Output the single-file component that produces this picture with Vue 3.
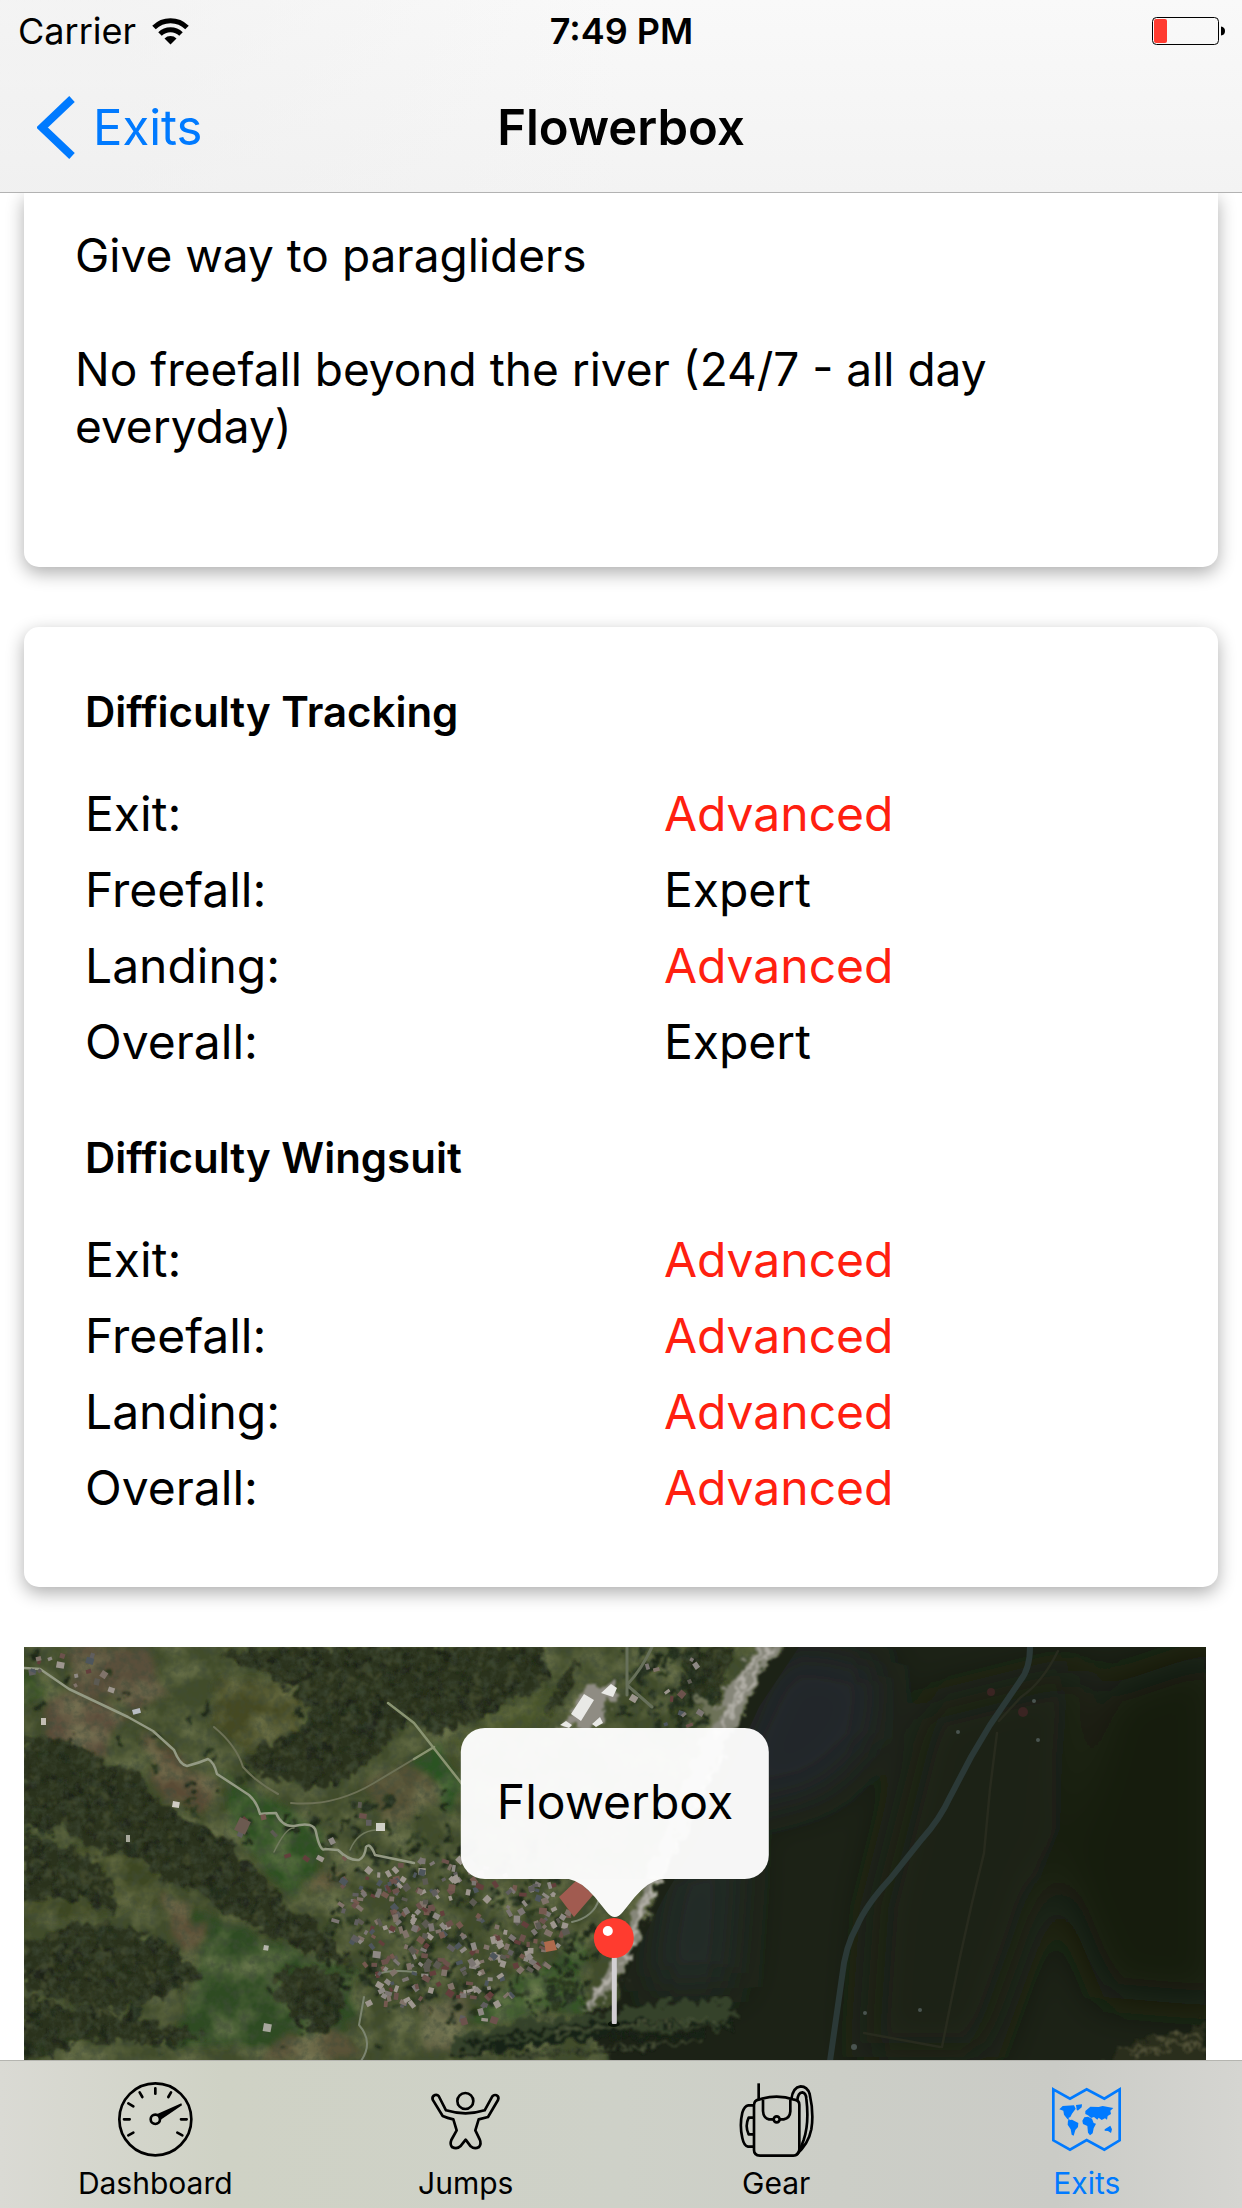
<template>
  <div class="screen">
    <header class="nav-header">
      <div class="status-bar">
        <div class="status-left">
          <span>Carrier</span>
          <svg class="wifi" viewBox="0 0 37 28" aria-hidden="true">
            <g fill="none" stroke="#000" stroke-width="5">
              <path d="M2 10.500A23.500 23.500 0 0 1 35 10.500" />
              <path d="M8 17A15 15 0 0 1 29 17" />
            </g>
            <path d="M12.500 21.500A8.500 8.500 0 0 1 24.500 21.500L18.500 27.500Z" />
          </svg>
        </div>
        <span class="status-time">7:49 PM</span>
        <svg class="battery" viewBox="0 0 73 28" aria-hidden="true">
          <rect x="0.500" y="0.500" width="66" height="27" rx="4" fill="none" stroke="#000" />
          <rect x="2" y="2" width="13" height="24" rx="2" fill="#ff3b30" />
          <path d="M69 9.500q4 0.500 4 4.500t-4 4.500z" />
        </svg>
      </div>
      <nav class="nav-bar">
        <a href="#exits" class="back-link">
          <svg class="chevron" viewBox="0 0 38 63" aria-hidden="true">
            <path d="M35 3L5 31.500L35 60" fill="none" stroke="currentColor" stroke-width="8" />
          </svg>
          <span>Exits</span>
        </a>
        <h1 class="nav-title">Flowerbox</h1>
      </nav>
    </header>

    <main class="content">
      <section class="card card-rules">
        <p v-for="rule in rules" :key="rule">{{ rule }}</p>
      </section>

      <section class="card card-difficulty">
        <div v-for="group in difficulties" :key="group.id">
          <h2 :id="group.id">{{ group.title }}</h2>
          <table :aria-labelledby="group.id">
            <tbody>
              <tr v-for="row in group.rows" :key="row.label">
                <th scope="row">{{ row.label }}:</th>
                <td :class="{ advanced: row.level === 'Advanced' }">{{ row.level }}</td>
              </tr>
            </tbody>
          </table>
        </div>
      </section>

      <section class="map">
        <svg class="map-picture" viewBox="0 0 1182 414" preserveAspectRatio="xMidYMin slice" aria-hidden="true">
          <defs>
            <filter id="rough" x="-5%" y="-5%" width="110%" height="110%">
              <feTurbulence type="fractalNoise" baseFrequency="0.09" numOctaves="3" seed="4" result="n" />
              <feDisplacementMap in="SourceGraphic" in2="n" scale="22" xChannelSelector="R" yChannelSelector="G" />
              <feGaussianBlur stdDeviation="0.800" />
            </filter>
            <filter id="soft" x="-20%" y="-20%" width="140%" height="140%">
              <feTurbulence type="fractalNoise" baseFrequency="0.04" numOctaves="3" seed="9" result="n" />
              <feDisplacementMap in="SourceGraphic" in2="n" scale="26" xChannelSelector="R" yChannelSelector="G" />
              <feGaussianBlur stdDeviation="3" />
            </filter>
            <filter id="haze" x="-20%" y="-20%" width="140%" height="140%">
              <feGaussianBlur stdDeviation="22" />
            </filter>
            <filter id="grain" x="0" y="0" width="100%" height="100%">
              <feTurbulence type="fractalNoise" baseFrequency="0.120" numOctaves="4" seed="12" />
              <feColorMatrix values="0 0 0 0 0.050  0 0 0 0 0.070  0 0 0 0 0.040  1.400 0 0 0 -0.580" />
            </filter>
            <filter id="light" x="0" y="0" width="100%" height="100%">
              <feTurbulence type="fractalNoise" baseFrequency="0.030" numOctaves="4" seed="31" />
              <feColorMatrix values="0 0 0 0 0.260  0 0 0 0 0.280  0 0 0 0 0.130  0 1.200 0 0 -0.450" />
            </filter>
            <clipPath id="shade-area">
              <path d="M775 0H1182V414H590L592 358L615 300L640 250L670 200L712 110L735 60Z" />
            </clipPath>
          </defs>

          <rect width="1182" height="414" fill="#414c2a" />

          <!-- campos -->
          <g filter="url(#soft)">
            <polygon v-for="(field, i) in fields" :key="i" :points="field.points" :fill="field.color" />
          </g>
          <rect width="760" height="414" filter="url(#light)" />

          <!-- bosques -->
          <g filter="url(#rough)">
            <polygon v-for="(points, i) in forests" :key="i" :points="points" fill="#29301e" />
          </g>
          <g filter="url(#rough)">
            <circle v-for="(tree, i) in trees" :key="i" :cx="tree.x" :cy="tree.y" :r="tree.r" :fill="tree.color" />
          </g>
          <rect width="760" height="414" filter="url(#grain)" />

          <!-- caminos -->
          <g fill="none" stroke-linecap="round" stroke-linejoin="round">
            <path d="M0 21L16 22L45 42L104 70L129 84L150 103Q156 118 163 119Q175 116 184 112Q190 115 193 127L225 148Q233 155 236 167Q246 166 252 166Q258 180 270 179Q290 174 292 185Q296 205 301 202L314 203Q325 214 335 213Q341 210 342 200Q346 195 351 208L390 216" stroke="#949a84" stroke-width="2.500" />
            <path d="M190 80Q212 98 219 120Q232 135 254 147M267 156Q310 160 350 136L390 112" stroke="#6d7156" stroke-width="2" />
            <path d="M326 203Q334 184 352 183M250 205Q262 180 270 181" stroke="#717a5e" stroke-width="1.500" />
            <path d="M364 56L390 76L438 137M390 112L410 100" stroke="#8a9472" stroke-width="2.500" />
            <path d="M352 328Q362 322 392 325M340 350L335 378Q350 395 337 414M548 275Q570 270 575 252" stroke="#7c8570" stroke-width="2" />
            <path d="M603 0V48M603 38Q618 22 628 0M603 38L628 60" stroke="#67705a" stroke-width="3" />
          </g>

          <!-- pueblo -->
          <g>
            <rect
              v-for="(house, i) in houses"
              :key="i"
              :x="house.x"
              :y="house.y"
              :width="house.w"
              :height="house.h"
              :fill="house.color"
              :transform="`rotate(${house.angle} ${house.x} ${house.y})`"
            />
          </g>
          <g filter="url(#rough)">
            <path d="M532 80L548 68L548 58L566 38L592 33L595 48L580 62L575 80Z" fill="#8f8c83" />
          </g>
          <path d="M547 67L560 47L570 53L557 74ZM577 46L587 37L593 41L589 50ZM568 77L576 70L579 76L572 80ZM536 78L542 74L548 78L545 81Z" fill="#e9e9e6" />
          <path d="M535 250L553 233L569 248L550 270Z" fill="#a15b50" />
          <path d="M520 295L530 293L533 303L522 305Z" fill="#b06a4c" />

          <!-- ladera en sombra -->
          <g filter="url(#rough)">
            <polygon points="765,0 742,18 730,45 715,78 692,110 650,200 625,265 605,310 592,358 560,365 590,420 1190,420 1190,-10 770,-10" fill="#1c2017" />
          </g>
          <g clip-path="url(#shade-area)">
            <g filter="url(#haze)">
              <polygon points="755,0 810,5 860,20 850,95 800,145 700,170 715,85" fill="#20282a" />
              <polygon points="640,220 720,190 710,340 620,345" fill="#202c27" />
              <polygon points="900,60 1060,20 1040,180 1000,300 960,410 840,410 850,260" fill="#1b2112" />
              <polygon points="1080,40 1200,0 1200,360 1080,350 1030,230" fill="#181a11" />
            </g>
          </g>
          <g filter="url(#rough)">
            <path d="M733 -5L765 -5L740 20L714 76L696 108L650 196L628 250L603 318L592 340L578 352L560 362L570 345L590 310L607 268L640 190L682 84L700 44L716 26Z" fill="#868679" />
            <path d="M746 0L706 70M735 0L692 92M700 105L612 278M622 246L600 316M594 320L566 358" fill="none" stroke="#b3b0a8" stroke-width="3" />
            <path d="M675 48L692 72L683 84L700 60" fill="none" stroke="#6d7258" stroke-width="7" />
          </g>
          <g filter="url(#rough)">
            <polygon points="425,390 500,375 580,366 640,355 705,353 715,372 690,383 600,385 500,400 430,405" fill="#36422b" />
            <path d="M440 395L590 375L710 380M430 408L560 390L680 389M490 410L640 398M460 400L600 384" fill="none" stroke="#192015" stroke-width="4" />
            <path d="M480 412L600 400L680 394M530 386L690 372" fill="none" stroke="#4c543a" stroke-width="1.500" />
            <path d="M1085 414L1110 395L1140 388L1182 376V420H1085Z" fill="#2b2f1e" />
            <path d="M1094 402L1135 404M1105 410L1160 394M1130 390L1180 402M1150 384L1182 392" fill="none" stroke="#55553a" stroke-width="2" />
          </g>
          <g fill="none" stroke-linecap="round">
            <path d="M1006 0Q1006 22 996 34L966 78L947 110L926 150Q916 172 898 192L866 232Q842 258 833 279Q821 300 818 330L806 414" stroke="#2b3937" stroke-width="6" />
            <path d="M1034 4Q1018 36 997 50L975 74M973 86L966 142L960 206L948 256L936 310L918 400M840 386L916 400" stroke="#282b1e" stroke-width="2.500" />
          </g>
          <g fill="#3a2422">
            <circle cx="967" cy="45" r="4" />
            <circle cx="999" cy="65" r="5" />
          </g>
          <g fill="#4a5450">
            <circle cx="934" cy="85" r="2" />
            <circle cx="1010" cy="54" r="2" />
            <circle cx="1014" cy="93" r="2" />
            <circle cx="896" cy="363" r="2" />
            <circle cx="841" cy="366" r="2" />
            <circle cx="830" cy="400" r="3" />
          </g>
        </svg>

        <div class="marker">
          <button type="button" class="callout">Flowerbox</button>
          <svg class="pin" viewBox="0 0 92 148" aria-hidden="true">
            <path d="M0 0Q12 2 26 18L38 33Q46 43 54 33L66 18Q80 2 92 0Z" fill="#f9f9f8" />
            <ellipse cx="45" cy="145" rx="6" ry="3" fill="#0a1408" />
            <rect x="43" y="78" width="5" height="67" rx="1" fill="#d3d0d4" />
            <circle cx="45" cy="59" r="20" fill="#ff3b2f" />
            <circle cx="39" cy="52" r="5" fill="#fff" />
          </svg>
        </div>
      </section>
    </main>

    <nav class="tab-bar">
      <a href="#dashboard" class="tab">
        <svg viewBox="174 96 225 225" aria-hidden="true">
          <g fill="none" stroke="currentColor" stroke-width="8">
            <circle cx="286" cy="208" r="108" />
            <circle cx="286" cy="208" r="14" />
            <path
              d="M286 115V131M239 127L247 141M333 127L325 141M205 160L220 169M192 208H209M363 208H380M205 256L220 248M367 256L352 248"
              stroke-linecap="round"
            />
          </g>
          <path d="M290 193L364 160L366 166L300 211Z" fill="currentColor" />
        </svg>
        <span>Dashboard</span>
      </a>
      <a href="#jumps" class="tab">
        <svg viewBox="174 96 225 225" aria-hidden="true">
          <g fill="none" stroke="currentColor" stroke-width="8" stroke-linejoin="round">
            <circle cx="286" cy="153" r="24" />
            <path d="M206 138Q202 133 195 135Q185 139 188 149L218 198Q232 204 250 208L260 241L244 270Q239 283 246 291Q260 299 271 289L287 269L302 289Q314 299 327 291Q335 282 329 268L316 241L326 208L354 201L384 150Q388 140 380 136Q372 133 367 139L344 181Q287 199 228 181Z" />
          </g>
        </svg>
        <span>Jumps</span>
      </a>
      <a href="#gear" class="tab">
        <svg viewBox="177 96 225 225" aria-hidden="true">
          <g fill="none" stroke="currentColor" stroke-width="8" stroke-linejoin="round">
            <path d="M236 100V150" />
            <path d="M222 166Q222 151 236 149Q290 131 343 149Q358 151 358 164V298Q356 317 340 317H240Q222 316 222 300Z" />
            <path d="M249 149V183Q250 204 267 208H280M300 208H311Q330 204 331 184V149" />
            <circle cx="290" cy="208" r="9" />
            <path d="M221 166H205Q193 168 187 188Q178 226 187 264Q192 288 204 290H222M221 203H206Q194 228 206 253H221" />
            <path d="M334 148Q338 112 362 109Q382 109 389 132Q402 190 394 238Q385 283 349 314M352 153Q353 128 367 127Q378 129 379 146Q388 220 371 270L360 299" />
          </g>
        </svg>
        <span>Gear</span>
      </a>
      <a href="#exits" class="tab active" aria-current="page">
        <svg viewBox="177 96 225 225" aria-hidden="true">
          <path
            d="M190 118L240 146L290 118L343 146L389 118V271L343 299L290 270L240 299L190 271Z"
            fill="none"
            stroke="currentColor"
            stroke-width="8"
          />
          <g fill="currentColor">
            <path d="M208 178L218 168L252 166L257 176L246 191L241 201L235 204L241 212L232 207L222 194L220 182Z" />
            <path d="M258 165L276 163L275 172L263 182L260 178Z" />
            <path d="M234 211L246 209L265 219L264 231L256 240L251 257L245 254L242 238L233 224Z" />
            <path d="M286 192L286 183L301 170L326 171L338 168L370 174L361 182L363 192L353 198L351 209L345 205L335 210L326 203L322 209L312 201L303 204L294 196Z" />
            <path d="M283 202L294 200L306 206L311 219L318 221L311 235L308 250L300 256L294 248L292 228L279 222L277 212Z" />
            <path d="M344 238L361 227L366 238L363 249L354 243L344 242Z" />
          </g>
        </svg>
        <span>Exits</span>
      </a>
    </nav>
  </div>
</template>

<script setup>
const rules = [
  'Give way to paragliders',
  'No freefall beyond the river (24/7 - all day everyday)'
]

const difficulties = [
  {
    id: 'tracking',
    title: 'Difficulty Tracking',
    rows: [
      { label: 'Exit', level: 'Advanced' },
      { label: 'Freefall', level: 'Expert' },
      { label: 'Landing', level: 'Advanced' },
      { label: 'Overall', level: 'Expert' }
    ]
  },
  {
    id: 'wingsuit',
    title: 'Difficulty Wingsuit',
    rows: [
      { label: 'Exit', level: 'Advanced' },
      { label: 'Freefall', level: 'Advanced' },
      { label: 'Landing', level: 'Advanced' },
      { label: 'Overall', level: 'Advanced' }
    ]
  }
]

// Campos abiertos del valle
const fields = [
  { points: '45,0 125,0 140,50 110,65 50,40', color: '#5a503b' },
  { points: '25,50 60,45 100,72 80,110 20,95', color: '#5b4d3b' },
  { points: '115,88 145,100 165,125 195,130 180,165 140,155', color: '#5a4c35' },
  { points: '0,22 25,30 20,55 0,62', color: '#2f4a1e' },
  { points: '195,125 290,180 300,205 270,250 220,200', color: '#2f5120' },
  { points: '160,260 330,325 320,400 150,400 180,300', color: '#2e4c20' },
  { points: '130,250 165,255 180,290 165,305', color: '#5d5138' },
  { points: '200,30 280,50 270,90 220,105 185,70', color: '#454823' },
  { points: '60,195 110,205 150,240 120,260 0,275 0,240', color: '#3e4724' },
  { points: '255,385 330,390 340,414 240,414', color: '#5a5238' },
  { points: '285,225 330,230 320,245 290,240', color: '#5b5136' },
  { points: '340,140 390,110 410,145 370,180', color: '#555136' },
  { points: '430,90 500,50 545,45 520,75 440,115', color: '#4a552b' },
  { points: '390,110 415,100 440,140 425,170', color: '#2c5322' },
  { points: '480,340 530,310 560,290 560,360 460,378 430,370', color: '#345527' },
  { points: '400,355 440,350 430,405 400,405', color: '#5d5b40' }
]

const forests = [
  '0,92 43,93 76,113 116,126 133,156 163,173 209,193 216,213 243,233 263,260 296,280 329,320 303,313 253,293 209,270 176,246 136,233 103,203 73,203 39,180 0,180',
  '193,3 370,0 520,0 523,36 457,70 410,88 365,55 385,75 343,116 309,140 276,140 236,126 219,110 266,86 286,73 276,50 243,26 203,13',
  '256,325 290,318 320,335 320,365 305,386 270,372 252,350',
  '0,300 50,275 100,280 150,300 180,330 150,345 95,365 60,360 0,340',
  '0,350 50,360 110,370 180,388 150,395 60,395 0,414',
  '0,190 60,205 90,235 92,268 60,250 0,255',
  '540,30 555,12 552,35 535,60 520,70',
  '660,0 712,0 690,60 660,50'
]

// Generador con semilla fija: el paisaje no cambia entre renders
let seed = 20170
function random() {
  seed = (seed * 16807) % 2147483647
  return seed / 2147483647
}

function pick(list) {
  return list[Math.floor(random() * list.length)]
}

function scatter(count, x, y, width, height, make) {
  return Array.from({ length: count }, () => make(x + random() * width, y + random() * height))
}

function isInside(points, x, y) {
  const corners = points.split(' ').map(p => p.split(',').map(Number))
  let inside = false
  for (let i = 0, j = corners.length - 1; i < corners.length; j = i++) {
    const [xi, yi] = corners[i]
    const [xj, yj] = corners[j]
    if (yi > y !== yj > y && x < ((xj - xi) * (y - yi)) / (yj - yi) + xi) inside = !inside
  }
  return inside
}

const forestTree = (x, y) => ({ x, y, r: 1 + random() * 2.5, color: pick(['#39422a', '#40472c', '#1b2216', '#20281a']) })
const looseTree = (x, y) => ({ x, y, r: 2 + random() * 3, color: pick(['#222d1b', '#1c2717', '#29371f']) })

const trees = [
  ...scatter(5200, 0, 0, 720, 414, forestTree).filter(t => forests.some(f => isInside(f, t.x, t.y))),
  ...scatter(190, 300, 195, 240, 175, looseTree),
  ...scatter(70, 590, 0, 110, 80, looseTree),
  ...scatter(30, 300, 150, 130, 60, looseTree),
  ...scatter(40, 510, 280, 65, 80, looseTree),
  ...scatter(90, 0, 0, 430, 414, looseTree)
]

const roofs = ['#7c7673', '#8e8984', '#605e5e', '#6c524c', '#75594f', '#9d968e', '#4e565c', '#80736a', '#5c5a52', '#633f3c']
const house = (x, y) => ({
  x,
  y,
  w: 3 + random() * 5,
  h: 3 + random() * 4,
  angle: Math.round(random() * 80),
  color: pick(roofs)
})

const village = '345,215 438,205 500,232 532,235 548,275 528,310 505,330 475,370 435,375 405,350 370,360 335,370 345,320 300,270 320,225'

const houses = [
  ...scatter(520, 300, 200, 250, 175, house).filter(h => isInside(village, h.x, h.y)),
  ...scatter(16, 5, 0, 90, 40, house),
  ...scatter(12, 205, 150, 140, 60, house),
  ...scatter(14, 600, 10, 80, 70, house),
  { x: 240, y: 376, w: 8, h: 8, angle: 10, color: '#a6a69c' },
  { x: 240, y: 298, w: 5, h: 5, angle: 10, color: '#b5b5ab' },
  { x: 216, y: 170, w: 12, h: 14, angle: 25, color: '#6b5a50' },
  { x: 352, y: 176, w: 9, h: 8, angle: 0, color: '#d0d0c8' },
  { x: 149, y: 154, w: 7, h: 6, angle: 10, color: '#d0ccc4' },
  { x: 108, y: 63, w: 8, h: 5, angle: -15, color: '#b9bdc4' },
  { x: 17, y: 71, w: 5, h: 7, angle: 0, color: '#c2bdb4' },
  { x: 102, y: 188, w: 4, h: 7, angle: 0, color: '#a9a99c' }
]
</script>

<style>
html,
body {
  background: #fff;
}

body {
  margin: 0;
}
</style>

<style scoped>
.screen {
  display: flex;
  flex-direction: column;
  height: 100vh;
  overflow: hidden;
  background: #fff;
  color: #000;
  font-family: Inter, "Liberation Sans", sans-serif;
}

.nav-header {
  background: linear-gradient(90deg, rgba(238, 238, 238, 0.5) 10%, transparent 50%), linear-gradient(#f9f9f9, #f3f3f3);
  border-bottom: 1px solid #b2b2b2;
}

.status-bar {
  display: grid;
  grid-template-columns: 1fr auto 1fr;
  align-items: center;
  height: 62px;
  padding: 0 17px 0 18px;
  font-size: 36px;
}

.status-left {
  display: flex;
  align-items: center;
  gap: 16px;
}

.wifi {
  width: 37px;
  height: 28px;
}

.status-time {
  font-weight: 600;
}

.battery {
  width: 73px;
  height: 28px;
  justify-self: end;
}

.nav-bar {
  display: grid;
  grid-template-columns: 1fr auto 1fr;
  align-items: center;
  height: 130px;
  padding: 0 37px;
  font-size: 49px;
}

.back-link {
  display: flex;
  align-items: center;
  gap: 18px;
  color: #007aff;
  text-decoration: none;
}

.chevron {
  width: 38px;
  height: 63px;
}

.nav-title {
  margin: 0;
  font-size: 49px;
  font-weight: 600;
}

.content {
  flex: 1;
  min-height: 0;
  display: flex;
  flex-direction: column;
  gap: 60px;
  padding: 0 24px;
  overflow: hidden;
}

.card {
  border-radius: 15px;
  background: #fff;
  box-shadow: 0 6px 18px rgba(0, 0, 0, 0.32);
}

.card-rules {
  display: flex;
  flex-direction: column;
  gap: 57px;
  padding: 34px 51px 112px;
  border-radius: 0 0 15px 15px;
  font-size: 46px;
  line-height: 57px;
}

.card-rules p {
  margin: 0;
}

.card-difficulty {
  display: flex;
  flex-direction: column;
  gap: 53px;
  padding: 60px 61px 61px;
}

.card-difficulty h2 {
  margin: 0 0 39px;
  font-size: 42px;
  font-weight: 600;
  line-height: 50px;
}

table {
  width: 100%;
  table-layout: fixed;
  border-collapse: collapse;
  font-size: 48px;
  line-height: 76px;
}

th,
td {
  padding: 0;
  font-weight: 400;
  text-align: left;
}

th {
  width: 54%;
}

.advanced {
  color: #ff2010;
}

.map {
  position: relative;
  flex: 1;
  min-height: 0;
  margin-right: 12px;
  overflow: hidden;
}

.map-picture {
  display: block;
  width: 100%;
  height: 100%;
}

.marker {
  position: absolute;
  top: 81px;
  left: 50%;
  display: flex;
  flex-direction: column;
  align-items: center;
  transform: translateX(-50%);
}

.callout {
  padding: 43px 36px 47px;
  border: 0;
  border-radius: 24px;
  background: rgba(255, 255, 255, 0.96);
  color: #000;
  font-family: inherit;
  font-size: 48px;
  line-height: 61px;
}

.pin {
  width: 92px;
  height: 148px;
}

.tab-bar {
  display: flex;
  background: linear-gradient(90deg, #dadad4, #cfd2c5 18%, #ced1c8 50%, #cacbc6 85%, #d5d5d1);
  border-top: 1px solid #b5b5b0;
}

.tab {
  flex: 1;
  display: flex;
  flex-direction: column;
  align-items: center;
  gap: 8px;
  padding: 21px 0 7px;
  color: #000;
  font-size: 30px;
  line-height: 36px;
  text-decoration: none;
}

.tab svg {
  width: 75px;
  height: 75px;
}

.tab.active {
  color: #007aff;
}
</style>
